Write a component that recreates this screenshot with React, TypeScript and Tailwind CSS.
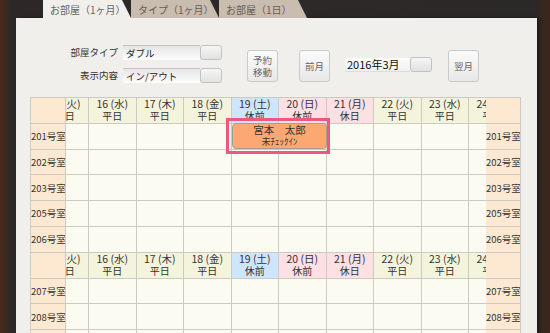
const days = [
  { d: "15 (火)", t: "平日", k: "w" },
  { d: "16 (水)", t: "平日", k: "w" },
  { d: "17 (木)", t: "平日", k: "w" },
  { d: "18 (金)", t: "平日", k: "w" },
  { d: "19 (土)", t: "休前", k: "s" },
  { d: "20 (日)", t: "休前", k: "h" },
  { d: "21 (月)", t: "休日", k: "h" },
  { d: "22 (火)", t: "平日", k: "w" },
  { d: "23 (水)", t: "平日", k: "w" },
  { d: "24 (木)", t: "平日", k: "w" },
  { d: "25 (金)", t: "平日", k: "w" },
];

const headBg: Record<string, string> = {
  w: "bg-[#f4f4dd]",
  s: "bg-[#cfe5fb]",
  h: "bg-[#fde0e3]",
};

type Row = { type: "head" } | { type: "room"; name: string };

const rows: Row[] = [
  { type: "head" },
  { type: "room", name: "201号室" },
  { type: "room", name: "202号室" },
  { type: "room", name: "203号室" },
  { type: "room", name: "205号室" },
  { type: "room", name: "206号室" },
  { type: "head" },
  { type: "room", name: "207号室" },
  { type: "room", name: "208号室" },
  { type: "room", name: "209号室" },
];

const Tab = ({ label, active }: { label: string; active?: boolean }) => (
  <div
    className={`w-[88px] h-[18px] pl-[7px] flex items-center text-[10px] [clip-path:polygon(0_0,calc(100%_-_9px)_0,100%_100%,0_100%)] ${
      active ? "bg-[#f0efec] text-[#666]" : "bg-[#c9bdb0] text-[#665c54]"
    }`}
  >
    {label}
  </div>
);

const Select = ({ value }: { value: string }) => (
  <div className="flex h-[15px]">
    <div className="flex-1 flex items-center pl-[3px] text-[9.5px] text-[#222] border-t border-[#c4c4c4] bg-gradient-to-b from-[#e6e6e6] to-[#fdfdfd]">
      {value}
    </div>
    <div className="w-[22px] border border-[#c2c2c2] rounded-[3px] bg-gradient-to-b from-[#f6f6f6] to-[#e2e2e2]" />
  </div>
);

const Btn = ({ children, cls }: { children: React.ReactNode; cls: string }) => (
  <div
    className={`${cls} mt-[5px] w-[31px] h-[32px] border border-[#cacaca] rounded-[3px] bg-gradient-to-b from-[#fbfbfb] to-[#e8e8e8] flex items-center justify-center text-center text-[9.5px] leading-[12px] text-[#666]`}
  >
    {children}
  </div>
);

const Controls = () => (
  <div className="h-[79px] pt-[27px] flex items-start">
    <div className="ml-[42px] grid grid-cols-[60px_99px] gap-x-[5px] gap-y-[8px] items-center">
      <div className="text-right text-[9.5px] text-[#333]">部屋タイプ</div>
      <Select value="ダブル" />
      <div className="text-right text-[9.5px] text-[#333]">表示内容</div>
      <Select value="イン/アウト" />
    </div>
    <Btn cls="ml-[25px]">
      予約
      <br />
      移動
    </Btn>
    <Btn cls="ml-[21px]">前月</Btn>
    <div className="ml-[15px] mt-[12px] flex items-center">
      <div className="w-[65px] h-[14px] flex items-center pl-[2px] text-[11px] text-[#111] bg-gradient-to-b from-[#fdfdfd] to-[#f0f0f0] border-b border-[#ddd]">
        2016年3月
      </div>
      <div className="w-[22px] h-[15px] border border-[#c2c2c2] rounded-[3px] bg-gradient-to-b from-[#f6f6f6] to-[#e2e2e2]" />
    </div>
    <Btn cls="ml-[16px]">翌月</Btn>
  </div>
);

const cell = "h-[25.8px] border-b border-[#cbcbc3]";

const Calendar = () => (
  <div className="relative ml-[14px] w-[491px] flex border-t border-l border-r border-[#cbcbc3] text-[#333]">
    <div className="w-[35px] shrink-0 border-r border-[#cbcbc3] bg-[#fde9d2] overflow-hidden">
      {rows.map((r, i) => (
        <div key={i} className={`${cell} flex items-center text-[9.5px] whitespace-nowrap`}>
          {r.type === "room" ? r.name : ""}
        </div>
      ))}
    </div>
    <div className="flex-1 overflow-hidden">
      <div className="ml-[-24.5px]">
        {rows.map((r, i) => (
          <div key={i} className="flex">
            {days.map((d, j) =>
              r.type === "head" ? (
                <div
                  key={j}
                  className={`${cell} ${headBg[d.k]} w-[47.5px] shrink-0 border-r flex flex-col items-center justify-center text-[10.5px] leading-[12px] whitespace-nowrap`}
                >
                  <span>{d.d}</span>
                  <span className="text-[10px]">{d.t}</span>
                </div>
              ) : (
                <div key={j} className={`${cell} bg-[#fbfbf2] w-[47.5px] shrink-0 border-r`} />
              )
            )}
          </div>
        ))}
      </div>
    </div>
    <div className="w-[34px] shrink-0 bg-[#fde9d2] overflow-hidden">
      {rows.map((r, i) => (
        <div key={i} className={`${cell} flex items-center text-[9.5px] whitespace-nowrap`}>
          {r.type === "room" ? r.name : ""}
        </div>
      ))}
    </div>
    <div className="absolute left-[201px] top-[25px] w-[95px] h-[26px] rounded-[4px] border border-[#a99c8f] bg-[#fba872] flex flex-col items-center justify-center text-[#333] leading-[12px]">
      <span className="text-[10.5px]">宮本　太郎</span>
      <span className="text-[9px]">未ﾁｪｯｸｲﾝ</span>
    </div>
    <div className="absolute left-[195px] top-[20px] w-[104px] h-[36px] border-[3px] border-[#ea5a80]" />
  </div>
);

export default function App() {
  return (
    <div className="w-[550px] h-[333px] overflow-hidden pl-[16px] bg-[linear-gradient(to_right,#4a2a1b,#2d2827_2%,#2b2928_97%,#3e2619)] font-['Noto_Sans_CJK_JP',sans-serif]">
      <div className="flex ml-[27px]">
        <Tab label="お部屋（1ヶ月）" active />
        <Tab label="タイプ（1ヶ月）" />
        <Tab label="お部屋（1日）" />
      </div>
      <div className="w-[521px] h-[315px] bg-[#f0efec] shadow-[2px_0_3px_rgba(0,0,0,0.4)]">
        <Controls />
        <Calendar />
      </div>
    </div>
  );
}
